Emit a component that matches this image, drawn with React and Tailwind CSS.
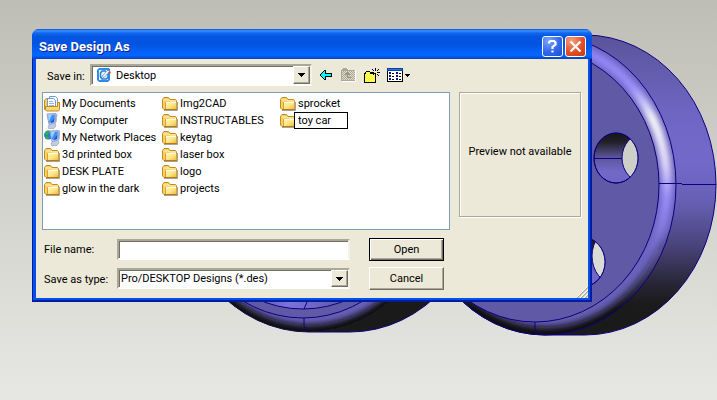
import React, { useState } from 'react';

const places = [
  { name: 'My Documents', icon: 'documents' },
  { name: 'My Computer', icon: 'computer' },
  { name: 'My Network Places', icon: 'network' },
  { name: '3d printed box' },
  { name: 'DESK PLATE' },
  { name: 'glow in the dark' },
  { name: 'Img2CAD' },
  { name: 'INSTRUCTABLES' },
  { name: 'keytag' },
  { name: 'laser box' },
  { name: 'logo' },
  { name: 'projects' },
  { name: 'sprocket' },
  { name: 'toy car', editing: true },
];

const sunken =
  'border-2 border-t-[#aca899] border-l-[#aca899] border-r-[#f4f2e8] border-b-white bg-white shadow-[inset_1px_1px_0_#716f64]';
const raised =
  'border border-t-white border-l-white border-r-[#716f64] border-b-[#716f64] bg-[#ece9d8] shadow-[inset_-1px_-1px_0_#aca899]';

const FolderIcon = () => (
  <svg width="16" height="16" viewBox="0 0 16 16" className="shrink-0" aria-hidden="true">
    <defs>
      <linearGradient id="folder" x1="0" y1="0" x2="1" y2="1">
        <stop offset="0" stopColor="#fff6c0" />
        <stop offset="0.5" stopColor="#fde584" />
        <stop offset="1" stopColor="#efb636" />
      </linearGradient>
    </defs>
    <path d="M2 14.5h13.5V6" fill="none" stroke="#a8a49a" />
    <path d="M0.5 12V3.5L2 1.5h4.5L8 3.5h5.5l1 1.5v8.500H2z" fill="#f6d068" stroke="#c58a1c" />
    <path d="M1.500 4h5.500l1 1h6" fill="none" stroke="#fff3b4" />
    <path d="M3.500 6.500h11v7h-11z" fill="url(#folder)" stroke="#dba02c" />
    <path d="M4 6.500h10" stroke="#fffbe0" />
    <path d="M2 13.500h13" stroke="#b87a10" />
  </svg>
);

const DocumentsIcon = () => (
  <svg width="16" height="16" viewBox="0 0 16 16" className="shrink-0" aria-hidden="true">
    <path d="M0.500 13.500V4.500L2 2.500h4v11z" fill="#f6cf60" stroke="#c08a20" />
    <path d="M5.500 0.500h6l2 2v9h-8z" fill="#f4f9ff" stroke="#7795c8" />
    <path d="M3.500 2.500h6l2 2v8h-8z" fill="#fff" stroke="#7795c8" />
    <path d="M5 5.500h4M5 7.500h5M5 9.500h5" stroke="#8fb8ec" />
    <path d="M1.500 10.500h12V6.500h2v7l-1 1.500h-12l-1-1.500z" fill="#f8d874" stroke="#c08a20" />
  </svg>
);

const Monitor = () => (
  <>
    <path d="M6 11l5-1 1 3-2 2.500H4.500L4 13z" fill="#c3cbe0" stroke="#8690ae" strokeWidth="0.500" />
    <path d="M11 2l2.500-1.500-1 9-2 1.500z" fill="#aab6d8" />
    <path d="M3 1l9-0.500-1 9.500-6 1.500z" fill="#c9d8f4" stroke="#8ba3d4" />
    <path d="M4 2l7-0.500-1 7.500-4.500 1z" fill="#3f8ff0" />
    <path d="M4 2l4-0.200L5 8z" fill="#9fd2ff" />
    <path d="M7 9l3.500-4-0.500 4-3 1z" fill="#1c57c8" />
  </>
);

const ComputerIcon = () => (
  <svg width="16" height="16" viewBox="0 0 16 16" className="shrink-0" aria-hidden="true">
    <Monitor />
  </svg>
);

const NetworkIcon = () => (
  <svg width="16" height="16" viewBox="0 0 16 16" className="shrink-0" aria-hidden="true">
    <circle cx="4.500" cy="5" r="4.500" fill="#2a78e0" />
    <path d="M1 2.500l3-2 2 1-2 3-2 1zM2 6l3 1-1 2.500-3-1z" fill="#36b43a" />
    <g transform="translate(3 0)">
      <Monitor />
    </g>
  </svg>
);

const DesktopIcon = () => (
  <svg width="16" height="16" viewBox="0 0 16 16" className="shrink-0" aria-hidden="true">
    <path d="M1 3l2-2h10l1 1v11l-2 2H3l-2-2z" fill="#2f8de4" />
    <path d="M3 3h9v10H3z" fill="#e3f3ff" />
    <path d="M10 4H6L4.500 6v4L6 12h4.500l1.500-2V7" fill="none" stroke="#2a7fd8" strokeWidth="1.500" />
    <path d="M6 9.500l6-6.500 1.500 1.500L8 10.500z" fill="#fff" stroke="#4a78b0" strokeWidth="0.700" />
    <path d="M13 4l2 1-1 2-1.500-1.500z" fill="#e04a26" />
  </svg>
);

const fileIcons = {
  documents: DocumentsIcon,
  computer: ComputerIcon,
  network: NetworkIcon,
};

const DropArrow = () => (
  <span
    className={`pointer-events-none flex w-[17px] shrink-0 items-center justify-center self-stretch ${raised}`}
  >
    <svg width="7" height="4" viewBox="0 0 7 4" shapeRendering="crispEdges" aria-hidden="true">
      <path d="M0 0h7v1H6v1H5v1H4v1H3V3H2V2H1V1H0z" />
    </svg>
  </span>
);

const toolButton = 'flex h-4 items-center justify-center';

const Toolbar = () => (
  <div className="ml-1.5 flex items-center gap-[7px]">
    <button type="button" aria-label="Back" className={`${toolButton} w-4`}>
      <svg width="12" height="10" viewBox="0 0 12 10" shapeRendering="crispEdges">
        <path d="M0 4h1V3h1V2h1V1h1V0h2v3h6v4H6v3H4V9H3V8H2V7H1V6H0z" />
        <path d="M1 4h1V3h1V2h1V1h1v3h6v2H5v3H4V8H3V7H2V6H1z" fill="#00ffff" />
      </svg>
    </button>
    <button type="button" disabled aria-label="Up one level" className={`${toolButton} w-4`}>
      <svg width="16" height="14" viewBox="0 0 16 14" shapeRendering="crispEdges">
        <defs>
          <pattern id="dither" width="2" height="2" patternUnits="userSpaceOnUse">
            <path d="M0 0h2v2H0z" fill="#aca899" />
            <path d="M0 0h1v1H0zM1 1h1v1H1z" fill="#dedbcd" />
          </pattern>
        </defs>
        <path d="M1 2h1V1h1V0h4v1h1v1h7v12H1z" fill="#fff" />
        <path d="M0 2h1V1h1V0h4v1h1v1h7v11H0z" fill="#aca899" />
        <path d="M1 3h13v9H1z" fill="url(#dither)" />
        <path d="M6 4h1v1h1v1h1v1H7v2h3v1H6V7H4V6h1V5h1z" fill="#98948a" />
      </svg>
    </button>
    <button type="button" aria-label="Create new folder" className={`${toolButton} w-4`}>
      <svg width="16" height="15" viewBox="0 0 16 15" shapeRendering="crispEdges">
        <defs>
          <pattern id="yellowDither" width="2" height="2" patternUnits="userSpaceOnUse">
            <path d="M0 0h2v2H0z" fill="#ffff00" />
            <path d="M0 0h1v1H0zM1 1h1v1H1z" fill="#fffa90" />
          </pattern>
        </defs>
        <path d="M0 5h1V4h1V3h4v1h1v1h5v10H0z" />
        <path d="M1 6h1V4h4v2h5v8H1z" fill="url(#yellowDither)" />
        <path d="M11 0h1v3h-1zM8 1h1v1H8zM9 2h1v1H9zM14 1h1v1h-1zM13 2h1v1h-1zM7 4h3v1H7zM13 4h3v1h-3zM13 6h1v1h-1zM14 7h1v1h-1zM11 6h1v3h-1zM9 6h1v1H9z" />
        <path d="M11 4h1v1h-1z" fill="#ff0" />
      </svg>
    </button>
    <button type="button" aria-label="View menu" className={`${toolButton} gap-0.5`}>
      <svg width="16" height="14" viewBox="0 0 16 14" shapeRendering="crispEdges">
        <path d="M0 0h16v14H0z" />
        <path d="M0 0h16v3H0z" fill="#0a3fa0" />
        <path d="M1 1h14v1H1z" fill="#2f74e8" />
        <path d="M1 3h14v10H1z" fill="#fff" />
        <path d="M2 4h2v2H2zM2 7h2v2H2zM2 10h2v2H2zM9 4h2v2H9zM9 7h2v2H9zM9 10h2v2H9z" fill="#101080" />
        <path d="M5 5h2v1H5zM5 8h2v1H5zM5 11h2v1H5zM12 5h2v1h-2zM12 8h2v1h-2zM12 11h2v1h-2z" />
      </svg>
      <svg width="5" height="3" viewBox="0 0 5 3" shapeRendering="crispEdges">
        <path d="M0 0h5v1H4v1H3v1H2V2H1V1H0z" />
      </svg>
    </button>
  </div>
);

const TitleBar = () => (
  <header className="flex h-[30px] items-center gap-0.5 rounded-t-[7px] bg-[linear-gradient(to_bottom,#0a50d8_0%,#3a93ff_6%,#1268f0_13%,#0355e0_25%,#0353e0_50%,#0560f8_75%,#0366ff_88%,#0450d8_96%,#033fb8_100%)] pt-1 pr-1.5 pl-[7px]">
    <h1 className="flex-1 pt-0.5 font-[Roboto,sans-serif] text-[13px] leading-5 font-bold text-white [text-shadow:1px_1px_0_#0f1e8a]">
      Save Design As
    </h1>
    <button
      type="button"
      aria-label="Help"
      className="flex size-[21px] items-center justify-center rounded-[3px] border border-white bg-[radial-gradient(circle_at_30%_20%,#7ea6ff,#3268ea_55%,#1c4ed0)]"
    >
      <svg width="11" height="14" viewBox="0 0 11 14" fill="none" stroke="#fff" strokeWidth="2.200">
        <path d="M2 4.500V3.500L3.500 2h3.500l1.500 1.500v2L5.500 8v2M5.500 11.500v2" />
      </svg>
    </button>
    <button
      type="button"
      aria-label="Close"
      className="flex size-[21px] items-center justify-center rounded-[3px] border border-white bg-[radial-gradient(circle_at_30%_20%,#f4a084,#e2502a_55%,#c83a10)]"
    >
      <svg width="13" height="13" viewBox="0 0 13 13" stroke="#fff" strokeWidth="2.200">
        <path d="M1.500 1.500l10 10M11.500 1.500l-10 10" />
      </svg>
    </button>
  </header>
);

const FileItem = ({ item }) => {
  const Icon = fileIcons[item.icon] || FolderIcon;
  const [name, setName] = useState(item.name);

  return (
    <li className="flex h-[17px] items-center whitespace-nowrap">
      <Icon />
      {item.editing ? (
        <input
          aria-label="Folder name"
          value={name}
          onChange={(e) => setName(e.target.value)}
          className="-ml-0.5 h-[17px] w-[54px] border border-black bg-white pl-[3px] outline-none"
        />
      ) : (
        <span className="pl-0.5">{item.name}</span>
      )}
    </li>
  );
};

const Wheels = () => (
  <svg
    width="717"
    height="400"
    viewBox="0 0 717 400"
    className="absolute top-0 left-0"
    aria-hidden="true"
  >
    <defs>
      <linearGradient id="side" gradientUnits="userSpaceOnUse" x1="0" y1="35" x2="0" y2="335">
        <stop offset="0" stopColor="#5a5499" />
        <stop offset="0.250" stopColor="#6e65c2" />
        <stop offset="0.420" stopColor="#7369cb" />
        <stop offset="0.550" stopColor="#6860b6" />
        <stop offset="0.700" stopColor="#4a447c" />
        <stop offset="0.840" stopColor="#252330" />
        <stop offset="0.900" stopColor="#1a1a1a" />
      </linearGradient>
      <linearGradient id="shine" gradientUnits="userSpaceOnUse" x1="0" y1="40" x2="0" y2="330">
        <stop offset="0" stopColor="#8c80f4" />
        <stop offset="0.160" stopColor="#9c90ff" />
        <stop offset="0.270" stopColor="#ffffff" />
        <stop offset="0.430" stopColor="#e4deff" />
        <stop offset="0.540" stopColor="#9c90ff" />
        <stop offset="0.750" stopColor="#7067c4" />
        <stop offset="1" stopColor="#5c559e" />
      </linearGradient>
      <linearGradient id="shade" gradientUnits="userSpaceOnUse" x1="0" y1="230" x2="0" y2="310">
        <stop offset="0" stopColor="#1a1a1a" stopOpacity="0" />
        <stop offset="1" stopColor="#0c0c0c" />
      </linearGradient>
      <linearGradient id="bore" x1="0" y1="0" x2="0" y2="1">
        <stop offset="0" stopColor="#161616" />
        <stop offset="0.180" stopColor="#222028" />
        <stop offset="0.500" stopColor="#5d569c" />
        <stop offset="0.750" stopColor="#7067c6" />
        <stop offset="1" stopColor="#7067c6" />
      </linearGradient>
      <linearGradient id="rim" gradientUnits="userSpaceOnUse" x1="265" y1="0" x2="343" y2="0">
        <stop offset="0" stopColor="#6a61b8" />
        <stop offset="0.300" stopColor="#7c72dc" />
        <stop offset="1" stopColor="#5f58a5" />
      </linearGradient>
      <filter id="soft" x="-10%" y="-10%" width="120%" height="120%">
        <feGaussianBlur stdDeviation="3" />
      </filter>
      <clipPath id="front">
        <ellipse cx="545" cy="185" rx="131" ry="150" />
      </clipPath>
      <clipPath id="holeA">
        <ellipse cx="616" cy="158" rx="22" ry="25" />
      </clipPath>
      <clipPath id="holeB">
        <ellipse cx="582" cy="262" rx="23" ry="25" />
      </clipPath>
      <clipPath id="below">
        <path d="M200 295h260v60H200z" />
      </clipPath>
      <clipPath id="frontLeft">
        <ellipse cx="309" cy="177" rx="135" ry="155" />
      </clipPath>
    </defs>

    {/* small wheel */}
    <g clipPath="url(#below)" stroke="#0c0080" fill="none">
      <path d="M309 22h41a135 155 0 0 1 0 310h-41a135 155 0 0 1 0-310z" fill="#1a1a1a" />
      <g clipPath="url(#frontLeft)" stroke="none">
        <ellipse cx="309" cy="177" rx="135" ry="155" fill="#6860b4" />
        <ellipse cx="309" cy="175" rx="138" ry="158" stroke="#0c0c0c" strokeWidth="16" filter="url(#soft)" />
      </g>
      <ellipse cx="303" cy="170" rx="129" ry="148" fill="#6059a6" />
      <ellipse cx="303" cy="163" rx="127" ry="146" fill="url(#rim)" />
      <path d="M307 302l-3 7M304 318v8l5 6" />
    </g>

    {/* large wheel */}
    <g stroke="#0c0080" fill="none">
      <path d="M545 35h40a131 150 0 0 1 0 300h-40a131 150 0 0 1 0-300z" fill="url(#side)" />
      <g clipPath="url(#front)" stroke="none">
        <ellipse cx="545" cy="185" rx="131" ry="150" fill="#6a61b8" />
        <ellipse cx="540" cy="185" rx="127" ry="143" stroke="url(#shine)" strokeWidth="10" filter="url(#soft)" />
        <ellipse cx="546" cy="183" rx="132" ry="153" stroke="url(#shade)" strokeWidth="17" filter="url(#soft)" />
      </g>
      <ellipse cx="545" cy="185" rx="131" ry="150" />
      <ellipse cx="535" cy="185" rx="124" ry="137" fill="#6059a6" />
      <path d="M659 183.500h23M682 184.500h34M535 322v7l4 6" />
    </g>

    <g stroke="#0c0080">
      <ellipse cx="616" cy="158" rx="22" ry="25" fill="url(#bore)" />
      <path d="M594 158.500h29" />
      <ellipse cx="645" cy="158" rx="23" ry="25" fill="#cfcfc9" clipPath="url(#holeA)" />
      <ellipse cx="616" cy="158" rx="22" ry="25" fill="none" />
      <ellipse cx="582" cy="262" rx="23" ry="25" fill="url(#bore)" />
      <ellipse cx="615" cy="256" rx="23" ry="28" fill="#dadbd5" clipPath="url(#holeB)" />
      <ellipse cx="582" cy="262" rx="23" ry="25" fill="none" />
    </g>
  </svg>
);

const SaveDialog = () => {
  const [fileName, setFileName] = useState('');

  return (
    <section
      role="dialog"
      aria-label="Save Design As"
      className="relative rounded-t-[7px] bg-[#0a4fe0]"
    >
      <TitleBar />
      <div className="border-r-2 border-b-2 border-l border-[#001da0]">
        <form
          className="relative border-r-2 border-b-2 border-l-3 border-[#0450ee] bg-[#ece9d8] pt-[5px] pr-[7px] pb-2 pl-1.5"
          onSubmit={(e) => e.preventDefault()}
        >
          <div className="flex h-[22px] items-center">
            <label htmlFor="save-in" className="w-12 shrink-0 pt-0.5 pl-[5px]">
              Save in:
            </label>
            <div className={`flex h-[22px] max-w-[222px] flex-1 items-center ${sunken}`}>
              <span className="pl-1">
                <DesktopIcon />
              </span>
              <select id="save-in" className="min-w-0 flex-1 appearance-none pl-1 outline-none">
                <option>Desktop</option>
              </select>
              <DropArrow />
            </div>
            <Toolbar />
          </div>

          <div className="mt-1.5 flex items-start gap-[9px]">
            <ul className="grid h-[138px] min-w-0 flex-1 auto-cols-[118px] grid-flow-col grid-rows-[repeat(6,17px)] overflow-hidden border border-[#7f9db9] bg-white pt-0.5 pl-px">
              {places.map((item) => (
                <FileItem key={item.name} item={item} />
              ))}
            </ul>
            <div className="flex h-[125px] w-[122px] shrink-0 items-center justify-center border border-[#aca899] pb-1.5 text-center shadow-[inset_1px_1px_0_#fff,1px_1px_0_#fff]">
              Preview not available
            </div>
          </div>

          <div className="mt-2 mr-[137px] grid grid-cols-[75px_minmax(0,1fr)_75px] items-center gap-y-1.5">
            <label htmlFor="file-name" className="pl-0.5">
              File name:
            </label>
            <input
              id="file-name"
              value={fileName}
              onChange={(e) => setFileName(e.target.value)}
              className={`mr-[19px] h-[21px] px-0.5 outline-none ${sunken}`}
            />
            <button type="submit" className="h-[23px] border border-black bg-[#ece9d8] shadow-[inset_1px_1px_0_#fff,inset_-1px_-1px_0_#716f64,inset_-2px_-2px_0_#aca899]">
              Open
            </button>
            <label htmlFor="save-type" className="pt-0.5 pl-0.5">
              Save as type:
            </label>
            <div className={`mr-[19px] flex h-[21px] items-center ${sunken}`}>
              <select id="save-type" className="min-w-0 flex-1 appearance-none pl-0.5 outline-none">
                <option>Pro/DESKTOP Designs (*.des)</option>
              </select>
              <DropArrow />
            </div>
            <button type="button" className={`h-[23px] ${raised}`}>
              Cancel
            </button>
          </div>

          <svg width="11" height="11" viewBox="0 0 11 11" className="absolute right-0 bottom-0" aria-hidden="true">
            <path d="M0 11L11 0M4 11l7-7M8 11l3-3" stroke="#aca899" strokeWidth="1.500" />
            <path d="M-1 11L11-1M3 11l8-8M7 11l4-4" stroke="#fff" />
          </svg>
        </form>
      </div>
    </section>
  );
};

const App = () => (
  <main className="relative min-h-screen overflow-hidden bg-linear-to-b from-[#bfbeb6] to-[#e7e8e4] pt-[29px] pr-[125px] pb-[98px] pl-8 font-[Roboto,sans-serif] text-[11px] leading-[15px] text-black">
    <Wheels />
    <SaveDialog />
  </main>
);

export default App;
